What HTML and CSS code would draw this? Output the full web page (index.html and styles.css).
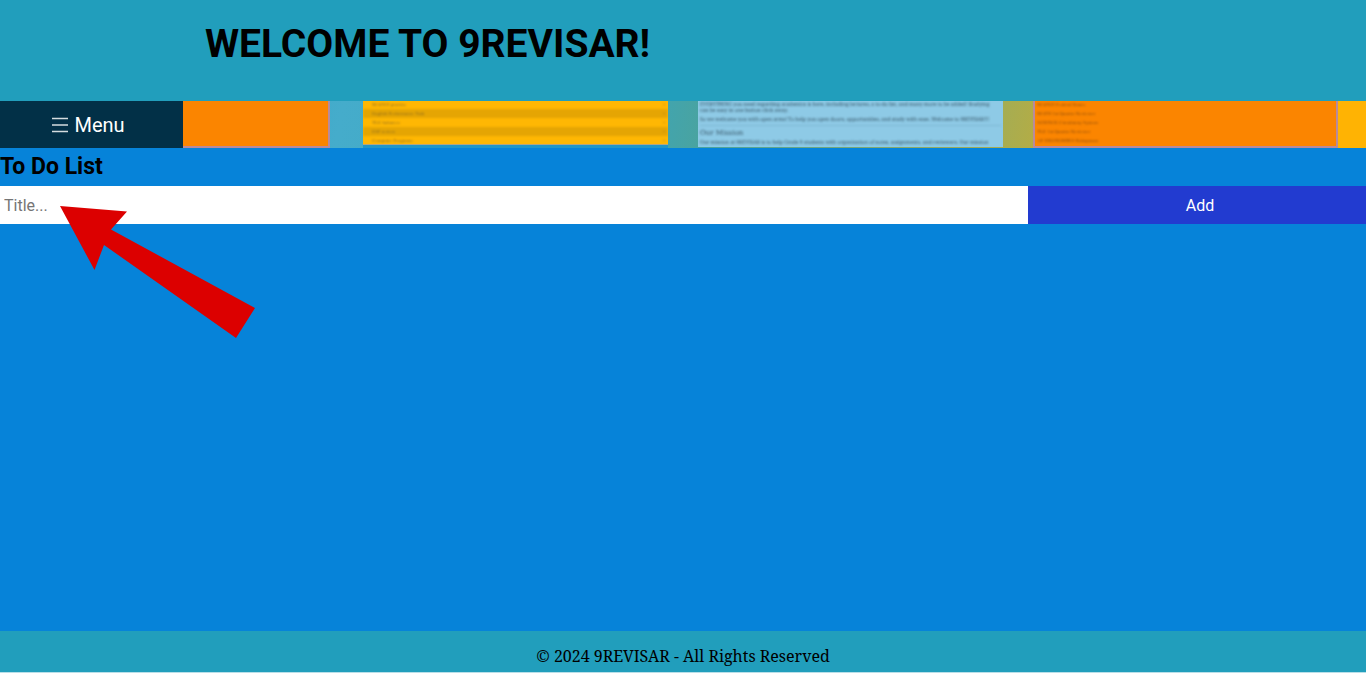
FILE: index.html
```html
<!DOCTYPE html>
<html lang="en">
<head>
<meta charset="utf-8">
<meta name="viewport" content="width=device-width, initial-scale=1">
<title>9REVISAR - To Do List</title>
<link rel="stylesheet" href="styles.css">
</head>
<body>
<header class="banner"><h1>WELCOME TO 9REVISAR!</h1></header>
<nav class="strip">
  <button class="menu" type="button"><svg class="bars" viewBox="0 0 16 16" aria-hidden="true"><path d="M0 1.500h16M0 8h16M0 14.500h16"/></svg>Menu</button>
  <div class="card orange first"></div>
  <div class="card yellow">
    <ul class="rows">
      <li>MAPEH practice<span>•</span></li>
      <li>English Performance Task<span>•</span></li>
      <li>TLE balances<span>•</span></li>
      <li>ESP review<span>•</span></li>
      <li>Computer Programs<span>•</span></li>
    </ul>
  </div>
  <div class="card about">
    <p>EVERYTHING you need regarding academics is here, including lectures, a to-do list, and many more to be added! Studying<br>can be easy in one button click away.</p>
    <p>So we welcome you with open arms! To help you open doors, opportunities, and study with ease. Welcome to 9REVISAR!!!</p>
    <h2>Our Mission</h2>
    <p>Our mission at 9REVISAR is to help Grade 9 students with organization of notes, assignments, and reviewers. Our mission</p>
  </div>
  <div class="card orange">
    <ul class="links">
      <li>MAPEH Festival Dance</li>
      <li>MATH 1st Quarter Reviewer</li>
      <li>SCIENCE Circulatory System</li>
      <li>TLE 1st Quarter Reviewer</li>
      <li>AP EKONOMIKS Kakapusan</li>
    </ul>
  </div>
  <div class="last"></div>
</nav>
<main class="todo">
  <h2>To Do List</h2>
  <form class="entry">
    <input type="text" placeholder="Title..." aria-label="Title">
    <button type="button">Add</button>
  </form>
  <svg class="arrow" viewBox="0 0 196 134" aria-hidden="true"><path d="M0 1 67 6.500 51 24.500 195 103 176 133 44 40 34.500 65Z"/></svg>
</main>
<footer class="footer">© 2024 9REVISAR - All Rights Reserved</footer>
</body>
</html>
```
FILE: styles.css
```css
* { box-sizing: border-box; }
body {
  margin: 0;
  min-height: 100vh;
  display: flex;
  flex-direction: column;
  background: #0683d9;
  color: #000;
  font-family: Roboto, sans-serif;
}
h1, h2, p, ul { margin: 0; padding: 0; }
ul { list-style: none; }
.banner {
  padding: 20px 15% 32px;
  background: #219ebc;
}
.banner h1 { font-size: 39px; font-weight: 700; line-height: 49px; }
.strip {
  display: grid;
  grid-template-columns: 183fr 147fr 33fr 305fr 30fr 305fr 30fr 305fr 28fr;
  height: 47px;
  background: linear-gradient(100deg, #219ebc 0%, #45accb 25%, #3ea5b5 47%, #4ba39d 52%, #a5ad53 73%, #b9ac40 77%, #ffb703 98%);
}
.menu {
  display: flex;
  align-items: center;
  justify-content: center;
  gap: 6px;
  padding: 0 6px 0 0;
  border: 0;
  background: #023047;
  color: #fff;
  font: 20px Roboto, sans-serif;
}
.bars { width: 16px; height: 16px; fill: none; stroke: #d5dce0; stroke-width: 1.4; }
.card { min-width: 0; height: 47px; overflow: hidden; }
.orange {
  grid-column: 8;
  border: 2px solid #b98a9b;
  border-top: 0;
  background: #fb8500;
}
.first { grid-column: 2; border-left: 0; }
.yellow {
  grid-column: 4;
  height: 44px;
  border-bottom: 1px solid #b5a67f;
  background: #ffb703;
  box-shadow: 0 3px #2196c8;
}
.about { grid-column: 6; height: 46px; padding: 0 2px; background: #8ecae6; }
.last { grid-column: 9; background: #ffb303; }
.rows li {
  display: flex;
  justify-content: space-between;
  padding: 0 3px 0 9px;
  color: #8a6a20;
  font: 5px/9px "Liberation Serif", serif;
}
.rows li:nth-child(even) { background: #e5a503; }
.rows { margin-top: -1px; filter: blur(1px); }
.links { margin-top: -1px; padding: 0 2px; color: #884a0c; font: 5px/9px "Liberation Serif", serif; filter: blur(1px); }
.about p, .about h2 {
  color: #355364;
  font: 5px/6px "DejaVu Serif", "Noto Serif", serif;
  white-space: nowrap;
  filter: blur(1px);
}
.about p { font-family: "Noto Serif", serif; }
.about p:first-child { margin-bottom: 3px; }
.about h2 {
  margin-top: 3px;
  padding: 3px 0 2px;
  border-top: 1px solid #7fb9d6;
  font-size: 7px;
  line-height: 8px;
}
.todo { position: relative; flex: 1; }
.todo h2 { padding: 5px 0; font-size: 23px; font-weight: 700; line-height: 28px; }
.entry { display: flex; height: 38px; }
.entry input {
  flex: 1;
  min-width: 0;
  padding: 0 4px;
  border: 0;
  border-radius: 0;
  background: #fff;
  font: 16px Roboto, sans-serif;
}
.entry input::placeholder { color: #757575; }
.entry button {
  width: 24.75%;
  padding: 0 0 0 6px;
  border: 0;
  background: #223bd0;
  color: #fff;
  font: 16px Roboto, sans-serif;
}
.arrow { position: absolute; left: 60px; top: 57px; width: 196px; height: 134px; fill: #dc0000; }
.footer {
  padding: 14px 0 5px;
  border-bottom: 1px solid #b9dfe8;
  background: #219ebc;
  font: 16px/22px "Noto Serif", "Droid Serif", "Liberation Serif", serif;
  text-align: center;
}
```
